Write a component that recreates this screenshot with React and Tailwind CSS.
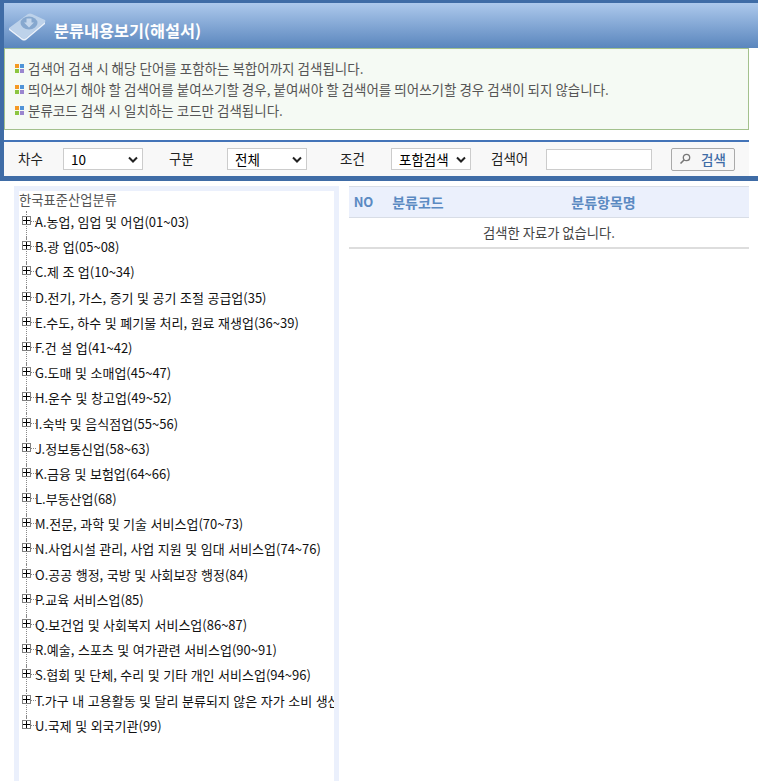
const cjk = { fontFamily: '"Noto Sans CJK KR", "Liberation Sans", sans-serif' }

const notices = [
  '검색어 검색 시 해당 단어를 포함하는 복합어까지 검색됩니다.',
  '띄어쓰기 해야 할 검색어를 붙여쓰기할 경우, 붙여써야 할 검색어를 띄어쓰기할 경우 검색이 되지 않습니다.',
  '분류코드 검색 시 일치하는 코드만 검색됩니다.',
]

const tree = [
  'A.농업, 임업 및 어업(01~03)',
  'B.광 업(05~08)',
  'C.제 조 업(10~34)',
  'D.전기, 가스, 증기 및 공기 조절 공급업(35)',
  'E.수도, 하수 및 폐기물 처리, 원료 재생업(36~39)',
  'F.건 설 업(41~42)',
  'G.도매 및 소매업(45~47)',
  'H.운수 및 창고업(49~52)',
  'I.숙박 및 음식점업(55~56)',
  'J.정보통신업(58~63)',
  'K.금융 및 보험업(64~66)',
  'L.부동산업(68)',
  'M.전문, 과학 및 기술 서비스업(70~73)',
  'N.사업시설 관리, 사업 지원 및 임대 서비스업(74~76)',
  'O.공공 행정, 국방 및 사회보장 행정(84)',
  'P.교육 서비스업(85)',
  'Q.보건업 및 사회복지 서비스업(86~87)',
  'R.예술, 스포츠 및 여가관련 서비스업(90~91)',
  'S.협회 및 단체, 수리 및 기타 개인 서비스업(94~96)',
  'T.가구 내 고용활동 및 달리 분류되지 않은 자가 소비 생산활동(97~98)',
  'U.국제 및 외국기관(99)',
]

function Bullet() {
  return (
    <span className="grid grid-cols-2 w-[9px] h-[9px] gap-px shrink-0">
      <span className="bg-[#f59a23]" />
      <span className="bg-[#4f94d8]" />
      <span className="bg-[#8cc63f]" />
      <span className="bg-[#9a86cf]" />
    </span>
  )
}

function HeaderIcon() {
  return (
    <svg width="37" height="28" viewBox="0 0 37 28" className="shrink-0 mt-[10px]">
      <path d="M0 15 L19 1 Q21 0 23 1 L36 7 Q37 8 36 9 L17 25 Q15 26 13 25 Z" fill="#bdd2ea" />
      <path d="M0 15 L13 25 Q15 26 17 25 L36 9 L36 11 L17 27 Q15 28 13 27 L0 17 Z" fill="#eaf1fa" />
      <ellipse cx="20" cy="10" rx="8.5" ry="6.5" fill="#86a8cf" />
      <path d="M17.5 5.5 H22.5 V9.5 H25 L20 14.5 L15 9.5 H17.5 Z" fill="#c3d6ec" />
    </svg>
  )
}

function Select({ value, width }) {
  return (
    <span className={`${width} h-[22px] border border-[#cccccc] bg-white flex items-center justify-between pl-[7px] pr-[4px] text-[13.5px] text-black`}>
      {value}
      <svg width="10" height="7" viewBox="0 0 10 7"><path d="M1 1.5 L5 5.5 L9 1.5" fill="none" stroke="#222" strokeWidth="2" /></svg>
    </span>
  )
}

function TreeRow({ label, last }) {
  return (
    <div className="relative h-[25.2px] flex items-start pl-[16px] whitespace-nowrap">
      <span className={`absolute left-[7px] -top-[2px] border-l border-dotted border-[#888] ${last ? 'h-[10px]' : 'h-[28px]'}`} />
      <span className="absolute left-[12px] top-[8px] w-[5px] border-t border-dotted border-[#888]" />
      <span className="absolute left-[3px] top-[3px] w-[9px] h-[9px] border border-[#808080] bg-white flex items-center justify-center">
        <svg width="7" height="7" viewBox="0 0 7 7"><path d="M0 3.5 H7 M3.5 0 V7" stroke="#000" strokeWidth="1" /></svg>
      </span>
      <span className="text-[13px] leading-[17px] text-[#111] [word-spacing:0.6px]">{label}</span>
    </div>
  )
}

export default function App() {
  return (
    <div className="w-[758px] h-[781px] overflow-hidden bg-white flex flex-col" style={cjk}>
      <div className="border-t-[3px] border-l-[4px] border-b-[5px] border-[#3f6ca6] h-[181px] flex flex-col">
        <div className="h-[45px] shrink-0 bg-gradient-to-b from-[#adc9ec] to-[#5a86bd] flex items-start pl-[5px] gap-[8px]">
          <HeaderIcon />
          <h1 className="text-[16.3px] font-bold text-white mt-[15px] leading-[24px]">분류내용보기(해설서)</h1>
        </div>
        <div className="w-[745px] h-[82px] shrink-0 border border-[#a3c18d] bg-[#f5faf4] pl-[10px] pt-[9px]">
          {notices.map(n => (
            <p key={n} className="h-[21px] flex items-center gap-[4px] text-[13.5px] text-[#555] whitespace-nowrap">
              <Bullet />{n}
            </p>
          ))}
        </div>
        <div className="h-[10px] shrink-0" />
        <div className="w-[745px] flex-1 border-t-2 border-[#4474b8] bg-[#f8f8f8] flex items-center text-[13.5px] text-[#222] pl-[14px]">
          <span className="w-[45px] -mt-[2px]">차수</span>
          <Select value="10" width="w-[80px]" />
          <span className="ml-[26px] w-[58px] -mt-[2px]">구분</span>
          <Select value="전체" width="w-[80px]" />
          <span className="ml-[33px] w-[51px] -mt-[2px]">조건</span>
          <Select value="포함검색" width="w-[80px]" />
          <span className="ml-[20px] w-[55px] -mt-[2px]">검색어</span>
          <span className="w-[106px] h-[21px] border border-[#cccccc] bg-white" />
          <button className="ml-[19px] w-[64px] h-[23px] border border-[#aaaaaa] rounded-[2px] bg-[#f7f7f7] flex items-center pl-[7px] gap-[10px] text-[#3f6ca6] font-medium">
            <svg width="12" height="12" viewBox="0 0 12 12"><circle cx="7.5" cy="4.5" r="3.2" fill="none" stroke="#777" strokeWidth="1.3" /><path d="M5 7 L1.5 10.5" stroke="#777" strokeWidth="1.6" /></svg>
            검색
          </button>
        </div>
      </div>
      <div className="flex-1 flex pl-[14px] pt-[5px] gap-[10px] min-h-0">
        <div className="w-[325px] border-[5px] border-b-0 border-[#ebf0fc] overflow-hidden">
          <div className="text-[13.3px] leading-[18px] text-[#555]">한국표준산업분류</div>
          <div className="pt-[4px]">
            {tree.map((t, i) => <TreeRow key={t} label={t} last={i === tree.length - 1} />)}
          </div>
        </div>
        <div className="w-[400px]">
          <div className="h-[32px] bg-[#ebf0fc] border-y border-[#d8dde6] flex items-center text-[14px] font-bold text-[#5b8ac2]">
            <span className="w-[29px] text-center text-[13px]">NO</span>
            <span className="w-[80px] text-center">분류코드</span>
            <span className="flex-1 text-center">분류항목명</span>
          </div>
          <div className="h-[31px] border-b-2 border-[#dddddd] flex items-center justify-center text-[13.3px] text-[#444]">
            검색한 자료가 없습니다.
          </div>
        </div>
      </div>
    </div>
  )
}
